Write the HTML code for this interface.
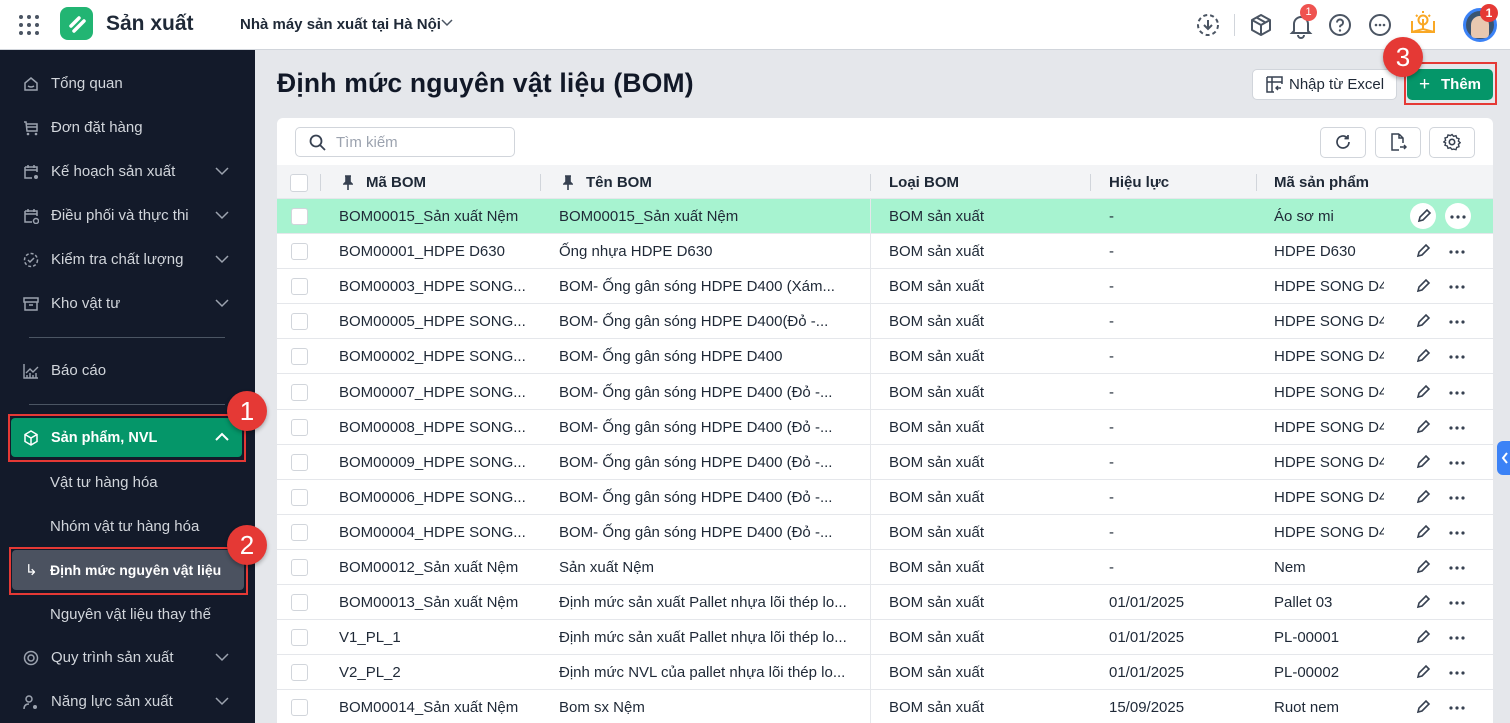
<!DOCTYPE html>
<html style="width:1510px;height:723px;overflow:hidden"><head><meta charset="utf-8">
<style>
*{box-sizing:border-box;margin:0;padding:0}
body{width:1510px;height:723px;overflow:hidden;font-family:"Liberation Sans","Noto Sans CJK SC",sans-serif;background:#e5e7eb;position:relative;color:#1f2937}
.abs{position:absolute}
.top{left:0;top:0;width:1510px;height:50px;background:#fff;border-bottom:1px solid #d1d5db}
.side{left:0;top:50px;width:255px;height:673px;background:#131a2a}
.si{position:absolute;left:0;width:255px;height:30px;color:#d1d5db;font-size:15px;line-height:30px}
.si .ic{position:absolute;left:23px;top:7px;width:16px;height:16px}
.si .t{position:absolute;left:51px}
.si .chev{position:absolute;left:215px;top:9px}
.sub{position:absolute;left:50px;color:#d1d5db;font-size:15px}
.hr{position:absolute;left:29px;width:196px;height:1px;background:#4b5563}
.card{left:277px;top:118px;width:1216px;height:605px;background:#fff;border-radius:6px 6px 0 0}
.row{position:absolute;left:277px;width:1216px;height:35px;border-bottom:1px solid #e5e7eb;font-size:15px;color:#1f2937;background:#fff;overflow:hidden}
.row span{position:absolute;top:9px;white-space:nowrap}
.row span.sp{width:110px;overflow:hidden}
.cb{position:absolute;left:14px;top:9px;width:17px;height:17px;border:1px solid #d1d5db;border-radius:3px;background:#fff}
.pen{position:absolute;left:1138px;top:9px}
.dots{position:absolute;left:1172px;top:16px;width:16px;height:4px}
.btn{position:absolute;border:1px solid #d1d5db;border-radius:5px;background:#fff}
.badge{position:absolute;width:40px;height:40px;border-radius:50%;background:#e53935;color:#fff;font-size:26px;text-align:center;line-height:40px;box-shadow:0 2px 4px rgba(0,0,0,.3)}
.rbox{position:absolute;border:2px solid #e53935}
</style></head><body>
<div class="abs top"></div>
<svg class="abs" style="left:18px;top:14px" width="22" height="22"><g fill="#4b5563"><circle cx="3" cy="3" r="2"/><circle cx="11" cy="3" r="2"/><circle cx="19" cy="3" r="2"/><circle cx="3" cy="11" r="2"/><circle cx="11" cy="11" r="2"/><circle cx="19" cy="11" r="2"/><circle cx="3" cy="19" r="2"/><circle cx="11" cy="19" r="2"/><circle cx="19" cy="19" r="2"/></g></svg>
<div class="abs" style="left:60px;top:7px;width:33px;height:33px;border-radius:8px;background:#22b573"></div>
<svg class="abs" style="left:60px;top:7px" width="33" height="33"><path d="M11 19 L19 11 M14 24 L24 14" stroke="#fff" stroke-width="3.5" stroke-linecap="round" fill="none"/></svg>
<div class="abs" style="left:106px;top:12px;font-size:21px;font-weight:bold;color:#1f2937">Sản xuất</div>
<div class="abs" style="left:240px;top:16px;font-size:15px;font-weight:bold;color:#1f2937">Nhà máy sản xuất tại Hà Nội</div>
<svg class="abs" style="left:441px;top:19px" width="12" height="8"><path d="M1 1l5 5 5-5" stroke="#4b5563" stroke-width="1.5" fill="none"/></svg>
<svg class="abs" style="left:1196px;top:13px" width="24" height="24"><circle cx="12" cy="12" r="10" stroke="#4b5563" stroke-width="2" fill="none" stroke-dasharray="4 3"/><path d="M12 7v9M8 12l4 4 4-4" stroke="#4b5563" stroke-width="2" fill="none"/></svg>
<div class="abs" style="left:1234px;top:14px;width:1px;height:22px;background:#d1d5db"></div>
<svg class="abs" style="left:1250px;top:13px" width="22" height="24"><path d="M11 2l9 5v10l-9 5-9-5V7z M2 7l9 5 9-5 M11 12v10 M6.5 4.5l9 5" stroke="#4b5563" stroke-width="2" fill="none" stroke-linejoin="round"/></svg>
<svg class="abs" style="left:1289px;top:13px" width="24" height="26"><path d="M5 18V11a7 7 0 0 1 14 0v7l2 2H3z M9 22a3 3 0 0 0 6 0" stroke="#4b5563" stroke-width="2" fill="none"/></svg>
<div class="abs" style="left:1300px;top:4px;width:17px;height:17px;border-radius:50%;background:#ef5350;color:#fff;font-size:11px;text-align:center;line-height:17px">1</div>
<svg class="abs" style="left:1328px;top:13px" width="24" height="24"><circle cx="12" cy="12" r="10" stroke="#4b5563" stroke-width="2" fill="none"/><path d="M9 9.5a3 3 0 1 1 4 2.8c-1 .4-1 1-1 2" stroke="#4b5563" stroke-width="2" fill="none"/><circle cx="12" cy="17.5" r="1.2" fill="#4b5563"/></svg>
<svg class="abs" style="left:1368px;top:13px" width="24" height="24"><circle cx="12" cy="12" r="10" stroke="#4b5563" stroke-width="2" fill="none"/><circle cx="8" cy="12" r="1.3" fill="#4b5563"/><circle cx="12" cy="12" r="1.3" fill="#4b5563"/><circle cx="16" cy="12" r="1.3" fill="#4b5563"/></svg>
<svg class="abs" style="left:1410px;top:9px" width="26" height="26"><path d="M2 12v11h22V12 M2 23l11-3 11 3 M13 20V10" stroke="#f9a825" stroke-width="2" fill="none"/><circle cx="13" cy="11" r="4.5" stroke="#f9a825" stroke-width="2" fill="none"/><path d="M13 2v2M6 6l1.5 1.5M20 6l-1.5 1.5" stroke="#f9a825" stroke-width="2"/></svg>
<div class="abs" style="left:1463px;top:8px;width:34px;height:34px;border-radius:50%;border:3px solid #3b82f6;background:#3a5470"></div>
<div class="abs" style="left:1471px;top:16px;width:18px;height:22px;border-radius:9px 9px 4px 4px;background:#e8c8b0"></div>
<div class="abs" style="left:1480px;top:4px;width:18px;height:18px;border-radius:50%;background:#e53935;color:#fff;font-size:12px;font-weight:bold;text-align:center;line-height:18px">1</div>

<div class="abs side"></div>
<div class="si" style="top:69px"><svg class="ic" viewBox="0 0 16 16"><path d="M2 7l6-5 6 5v7H2z M5 10q3 2 6 0" stroke="#9ca3af" stroke-width="1.5" fill="none"/></svg><span class="t">Tổng quan</span></div>
<div class="si" style="top:113px"><svg class="ic" viewBox="0 0 16 16"><path d="M1 2h2l1 9h10V4H3 M4 7h10" stroke="#9ca3af" stroke-width="1.5" fill="none"/><circle cx="5" cy="14" r="1.3" fill="#9ca3af"/><circle cx="13" cy="14" r="1.3" fill="#9ca3af"/></svg><span class="t">Đơn đặt hàng</span></div>
<div class="si" style="top:157px"><svg class="ic" viewBox="0 0 16 16"><path d="M2 3h12v5 M2 3v11h7 M2 6h12 M5 1v3M11 1v3" stroke="#9ca3af" stroke-width="1.5" fill="none"/><circle cx="13" cy="13" r="2" fill="#9ca3af"/></svg><span class="t">Kế hoạch sản xuất</span><svg class="chev" width="14" height="10"><path d="M1 2l6 6 6-6" stroke="#9ca3af" stroke-width="1.5" fill="none"/></svg></div>
<div class="si" style="top:201px"><svg class="ic" viewBox="0 0 16 16"><path d="M2 3h12v5 M2 3v11h7 M2 6h12 M5 1v3M11 1v3" stroke="#9ca3af" stroke-width="1.5" fill="none"/><circle cx="13" cy="13" r="2.5" stroke="#9ca3af" stroke-width="1.5" fill="none"/></svg><span class="t">Điều phối và thực thi</span><svg class="chev" width="14" height="10"><path d="M1 2l6 6 6-6" stroke="#9ca3af" stroke-width="1.5" fill="none"/></svg></div>
<div class="si" style="top:245px"><svg class="ic" viewBox="0 0 16 16"><circle cx="8" cy="8" r="6.5" stroke="#9ca3af" stroke-width="1.5" fill="none" stroke-dasharray="3 2"/><path d="M5 8l2 2 4-4" stroke="#9ca3af" stroke-width="1.5" fill="none"/></svg><span class="t">Kiểm tra chất lượng</span><svg class="chev" width="14" height="10"><path d="M1 2l6 6 6-6" stroke="#9ca3af" stroke-width="1.5" fill="none"/></svg></div>
<div class="si" style="top:289px"><svg class="ic" viewBox="0 0 16 16"><path d="M1 2h14v4H1z M2 6v8h12V6 M6 9h4" stroke="#9ca3af" stroke-width="1.5" fill="none"/></svg><span class="t">Kho vật tư</span><svg class="chev" width="14" height="10"><path d="M1 2l6 6 6-6" stroke="#9ca3af" stroke-width="1.5" fill="none"/></svg></div>
<div class="hr" style="top:337px"></div>
<div class="si" style="top:356px"><svg class="ic" viewBox="0 0 16 16"><path d="M1 1v14h14 M3 10l4-4 3 3 5-5 M4 15v-3M7 15v-5M10 15v-3M13 15v-5" stroke="#9ca3af" stroke-width="1.4" fill="none"/></svg><span class="t">Báo cáo</span></div>
<div class="hr" style="top:404px"></div>
<div class="abs" style="left:11px;top:418px;width:231px;height:39px;border-radius:4px;background:#059669"></div>
<div class="si" style="top:423px;color:#fff;font-weight:bold;font-size:14.5px"><svg class="ic" viewBox="0 0 16 16"><path d="M8 1l6 3.5v7L8 15l-6-3.5v-7z M2 4.5L8 8l6-3.5 M8 8v7" stroke="#fff" stroke-width="1.5" fill="none"/></svg><span class="t">Sản phẩm, NVL</span><svg class="chev" width="14" height="10"><path d="M1 8l6-6 6 6" stroke="#fff" stroke-width="2" fill="none"/></svg></div>
<div class="rbox" style="left:8px;top:414px;width:238px;height:48px"></div>
<div class="sub" style="top:474px">Vật tư hàng hóa</div>
<div class="sub" style="top:518px">Nhóm vật tư hàng hóa</div>
<div class="abs" style="left:12px;top:550px;width:232px;height:40px;border-radius:4px;background:#4b5260"></div>
<div class="abs" style="left:25px;top:561px;color:#fff;font-size:15px">↳</div>
<div class="sub" style="top:562px;color:#fff;font-weight:bold;font-size:14px">Định mức nguyên vật liệu</div>
<div class="rbox" style="left:9px;top:547px;width:239px;height:48px"></div>
<div class="sub" style="top:606px">Nguyên vật liệu thay thế</div>
<div class="si" style="top:643px"><svg class="ic" viewBox="0 0 16 16"><circle cx="8" cy="8" r="6.5" stroke="#9ca3af" stroke-width="1.5" fill="none"/><circle cx="8" cy="8" r="3" stroke="#9ca3af" stroke-width="1.5" fill="none"/></svg><span class="t">Quy trình sản xuất</span><svg class="chev" width="14" height="10"><path d="M1 2l6 6 6-6" stroke="#9ca3af" stroke-width="1.5" fill="none"/></svg></div>
<div class="si" style="top:687px"><svg class="ic" viewBox="0 0 16 16"><circle cx="6" cy="5" r="3" stroke="#9ca3af" stroke-width="1.5" fill="none"/><path d="M1 15q0-5 5-5" stroke="#9ca3af" stroke-width="1.5" fill="none"/><circle cx="12" cy="13" r="2" fill="#9ca3af"/></svg><span class="t">Năng lực sản xuất</span><svg class="chev" width="14" height="10"><path d="M1 2l6 6 6-6" stroke="#9ca3af" stroke-width="1.5" fill="none"/></svg></div>
<div class="badge" style="left:227px;top:391px">1</div>
<div class="badge" style="left:227px;top:525px">2</div>

<div class="abs" style="left:277px;top:68px;font-size:26.5px;font-weight:bold;color:#111827;letter-spacing:0.2px">Định mức nguyên vật liệu (BOM)</div>
<div class="btn" style="left:1252px;top:69px;width:145px;height:31px"></div>
<svg class="abs" style="left:1266px;top:76px" width="17" height="17"><path d="M1 1h15v7 M1 1v15h7 M1 6h15 M6 1v15" stroke="#374151" stroke-width="1.5" fill="none"/><path d="M15 12h-5M12 10l-2 2 2 2" stroke="#374151" stroke-width="1.4" fill="none"/></svg>
<div class="abs" style="left:1289px;top:76px;font-size:15px;color:#1f2937">Nhập từ Excel</div>
<div class="abs" style="left:1407px;top:69px;width:86px;height:31px;border-radius:5px;background:#059669"></div>
<div class="abs" style="left:1419px;top:74px;font-size:19px;color:#fff">+</div>
<div class="abs" style="left:1441px;top:76px;font-size:15px;color:#fff;font-weight:bold">Thêm</div>
<div class="rbox" style="left:1404px;top:62px;width:93px;height:43px"></div>
<div class="badge" style="left:1383px;top:37px">3</div>

<div class="abs card"></div>
<div class="abs" style="left:295px;top:127px;width:220px;height:30px;border:1px solid #d1d5db;border-radius:5px;background:#fff"></div>
<svg class="abs" style="left:309px;top:134px" width="17" height="17"><circle cx="7" cy="7" r="5.5" stroke="#374151" stroke-width="1.8" fill="none"/><path d="M11 11l5 5" stroke="#374151" stroke-width="1.8"/></svg>
<div class="abs" style="left:336px;top:134px;font-size:15px;color:#9ca3af">Tìm kiếm</div>
<div class="btn" style="left:1320px;top:127px;width:46px;height:31px"></div>
<svg class="abs" style="left:1335px;top:134px" width="16" height="16"><path d="M14 8a6 6 0 1 1-2-4.5 M13 1v3.5H9.5" stroke="#374151" stroke-width="1.7" fill="none"/></svg>
<div class="btn" style="left:1375px;top:127px;width:46px;height:31px"></div>
<svg class="abs" style="left:1390px;top:133px" width="17" height="18"><path d="M9 1H2v16h7 M9 1l4 4v5 M9 1v4h4 M10 14h6M14 12l2 2-2 2" stroke="#374151" stroke-width="1.5" fill="none"/></svg>
<div class="btn" style="left:1429px;top:127px;width:46px;height:31px"></div>
<svg class="abs" style="left:1443px;top:133px" width="18" height="18"><circle cx="9" cy="9" r="2.7" stroke="#374151" stroke-width="1.6" fill="none"/><path d="M9 1.5l1.6 1.8 2.4-.6.7 2.3 2.3.7-.6 2.4 1.8 1.6-1.8 1.6.6 2.4-2.3.7-.7 2.3-2.4-.6L9 16.5l-1.6-1.8-2.4.6-.7-2.3-2.3-.7.6-2.4L.8 9l1.8-1.6L2 5l2.3-.7L5 2l2.4.6z" stroke="#374151" stroke-width="1.4" fill="none"/></svg>

<div class="abs" style="left:277px;top:165px;width:1216px;height:34px;background:#f3f4f6;border-bottom:1px solid #e5e7eb"></div>
<div class="abs" style="left:290px;top:174px;width:18px;height:18px;border:1px solid #d1d5db;border-radius:3px;background:#fff"></div>
<div class="abs" style="left:320px;top:174px;width:1px;height:17px;background:#d1d5db"></div>
<div class="abs" style="left:540px;top:174px;width:1px;height:17px;background:#d1d5db"></div>
<div class="abs" style="left:870px;top:174px;width:1px;height:17px;background:#d1d5db"></div>
<div class="abs" style="left:1090px;top:174px;width:1px;height:17px;background:#d1d5db"></div>
<div class="abs" style="left:1256px;top:174px;width:1px;height:17px;background:#d1d5db"></div>
<svg class="abs" style="left:343px;top:175px" width="10" height="15"><path d="M2 1h6M3 1v6L1 9h8L7 7V1M5 9v6" stroke="#374151" stroke-width="1.6" fill="#374151"/></svg>
<svg class="abs" style="left:563px;top:175px" width="10" height="15"><path d="M2 1h6M3 1v6L1 9h8L7 7V1M5 9v6" stroke="#374151" stroke-width="1.6" fill="#374151"/></svg>
<div class="abs" style="left:366px;top:174px;font-size:15px;font-weight:bold;color:#1f2937">Mã BOM</div>
<div class="abs" style="left:586px;top:174px;font-size:15px;font-weight:bold;color:#1f2937">Tên BOM</div>
<div class="abs" style="left:889px;top:174px;font-size:15px;font-weight:bold;color:#1f2937">Loại BOM</div>
<div class="abs" style="left:1109px;top:174px;font-size:15px;font-weight:bold;color:#1f2937">Hiệu lực</div>
<div class="abs" style="left:1274px;top:174px;font-size:15px;font-weight:bold;color:#1f2937">Mã sản phẩm</div>

<div class="row" style="top:199px;background:#a7f3d0"><div class="cb"></div><span style="left:62px">BOM00015_Sản xuất Nệm</span><span style="left:282px">BOM00015_Sản xuất Nệm</span><span style="left:612px">BOM sản xuất</span><span style="left:832px">-</span><span class="sp" style="left:997px">Áo sơ mi</span>
<div class="abs" style="left:1133px;top:4px;width:26px;height:26px;border-radius:50%;background:#fff"></div><div class="abs" style="left:1168px;top:4px;width:26px;height:26px;border-radius:50%;background:#fff"></div>
<svg class="pen" style="left:1139px" width="16" height="16"><path d="M3 13l1-4 7-7 3 3-7 7z" stroke="#374151" stroke-width="1.6" fill="none"/></svg><svg class="dots" style="left:1173px" viewBox="0 0 16 4"><circle cx="2" cy="2" r="1.6" fill="#374151"/><circle cx="8" cy="2" r="1.6" fill="#374151"/><circle cx="14" cy="2" r="1.6" fill="#374151"/></svg></div>

<div class="row" style="top:234px"><div class="cb"></div><span style="left:62px">BOM00001_HDPE D630</span><span style="left:282px">Ống nhựa HDPE D630</span><span style="left:612px">BOM sản xuất</span><span style="left:832px">-</span><span class="sp" style="left:997px">HDPE D630</span><svg class="pen" width="16" height="16"><path d="M3 13l1-4 7-7 3 3-7 7z" stroke="#374151" stroke-width="1.6" fill="none"/></svg><svg class="dots" viewBox="0 0 16 4"><circle cx="2" cy="2" r="1.6" fill="#374151"/><circle cx="8" cy="2" r="1.6" fill="#374151"/><circle cx="14" cy="2" r="1.6" fill="#374151"/></svg></div>
<div class="row" style="top:269px"><div class="cb"></div><span style="left:62px">BOM00003_HDPE SONG...</span><span style="left:282px">BOM- Ống gân sóng HDPE D400 (Xám...</span><span style="left:612px">BOM sản xuất</span><span style="left:832px">-</span><span class="sp" style="left:997px">HDPE SONG D400</span><svg class="pen" width="16" height="16"><path d="M3 13l1-4 7-7 3 3-7 7z" stroke="#374151" stroke-width="1.6" fill="none"/></svg><svg class="dots" viewBox="0 0 16 4"><circle cx="2" cy="2" r="1.6" fill="#374151"/><circle cx="8" cy="2" r="1.6" fill="#374151"/><circle cx="14" cy="2" r="1.6" fill="#374151"/></svg></div>
<div class="row" style="top:304px"><div class="cb"></div><span style="left:62px">BOM00005_HDPE SONG...</span><span style="left:282px">BOM- Ống gân sóng HDPE D400(Đỏ -...</span><span style="left:612px">BOM sản xuất</span><span style="left:832px">-</span><span class="sp" style="left:997px">HDPE SONG D400</span><svg class="pen" width="16" height="16"><path d="M3 13l1-4 7-7 3 3-7 7z" stroke="#374151" stroke-width="1.6" fill="none"/></svg><svg class="dots" viewBox="0 0 16 4"><circle cx="2" cy="2" r="1.6" fill="#374151"/><circle cx="8" cy="2" r="1.6" fill="#374151"/><circle cx="14" cy="2" r="1.6" fill="#374151"/></svg></div>
<div class="row" style="top:339px"><div class="cb"></div><span style="left:62px">BOM00002_HDPE SONG...</span><span style="left:282px">BOM- Ống gân sóng HDPE D400</span><span style="left:612px">BOM sản xuất</span><span style="left:832px">-</span><span class="sp" style="left:997px">HDPE SONG D400</span><svg class="pen" width="16" height="16"><path d="M3 13l1-4 7-7 3 3-7 7z" stroke="#374151" stroke-width="1.6" fill="none"/></svg><svg class="dots" viewBox="0 0 16 4"><circle cx="2" cy="2" r="1.6" fill="#374151"/><circle cx="8" cy="2" r="1.6" fill="#374151"/><circle cx="14" cy="2" r="1.6" fill="#374151"/></svg></div>
<div class="row" style="top:375px"><div class="cb"></div><span style="left:62px">BOM00007_HDPE SONG...</span><span style="left:282px">BOM- Ống gân sóng HDPE D400 (Đỏ -...</span><span style="left:612px">BOM sản xuất</span><span style="left:832px">-</span><span class="sp" style="left:997px">HDPE SONG D400</span><svg class="pen" width="16" height="16"><path d="M3 13l1-4 7-7 3 3-7 7z" stroke="#374151" stroke-width="1.6" fill="none"/></svg><svg class="dots" viewBox="0 0 16 4"><circle cx="2" cy="2" r="1.6" fill="#374151"/><circle cx="8" cy="2" r="1.6" fill="#374151"/><circle cx="14" cy="2" r="1.6" fill="#374151"/></svg></div>
<div class="row" style="top:410px"><div class="cb"></div><span style="left:62px">BOM00008_HDPE SONG...</span><span style="left:282px">BOM- Ống gân sóng HDPE D400 (Đỏ -...</span><span style="left:612px">BOM sản xuất</span><span style="left:832px">-</span><span class="sp" style="left:997px">HDPE SONG D400</span><svg class="pen" width="16" height="16"><path d="M3 13l1-4 7-7 3 3-7 7z" stroke="#374151" stroke-width="1.6" fill="none"/></svg><svg class="dots" viewBox="0 0 16 4"><circle cx="2" cy="2" r="1.6" fill="#374151"/><circle cx="8" cy="2" r="1.6" fill="#374151"/><circle cx="14" cy="2" r="1.6" fill="#374151"/></svg></div>
<div class="row" style="top:445px"><div class="cb"></div><span style="left:62px">BOM00009_HDPE SONG...</span><span style="left:282px">BOM- Ống gân sóng HDPE D400 (Đỏ -...</span><span style="left:612px">BOM sản xuất</span><span style="left:832px">-</span><span class="sp" style="left:997px">HDPE SONG D400</span><svg class="pen" width="16" height="16"><path d="M3 13l1-4 7-7 3 3-7 7z" stroke="#374151" stroke-width="1.6" fill="none"/></svg><svg class="dots" viewBox="0 0 16 4"><circle cx="2" cy="2" r="1.6" fill="#374151"/><circle cx="8" cy="2" r="1.6" fill="#374151"/><circle cx="14" cy="2" r="1.6" fill="#374151"/></svg></div>
<div class="row" style="top:480px"><div class="cb"></div><span style="left:62px">BOM00006_HDPE SONG...</span><span style="left:282px">BOM- Ống gân sóng HDPE D400 (Đỏ -...</span><span style="left:612px">BOM sản xuất</span><span style="left:832px">-</span><span class="sp" style="left:997px">HDPE SONG D400</span><svg class="pen" width="16" height="16"><path d="M3 13l1-4 7-7 3 3-7 7z" stroke="#374151" stroke-width="1.6" fill="none"/></svg><svg class="dots" viewBox="0 0 16 4"><circle cx="2" cy="2" r="1.6" fill="#374151"/><circle cx="8" cy="2" r="1.6" fill="#374151"/><circle cx="14" cy="2" r="1.6" fill="#374151"/></svg></div>
<div class="row" style="top:515px"><div class="cb"></div><span style="left:62px">BOM00004_HDPE SONG...</span><span style="left:282px">BOM- Ống gân sóng HDPE D400 (Đỏ -...</span><span style="left:612px">BOM sản xuất</span><span style="left:832px">-</span><span class="sp" style="left:997px">HDPE SONG D400</span><svg class="pen" width="16" height="16"><path d="M3 13l1-4 7-7 3 3-7 7z" stroke="#374151" stroke-width="1.6" fill="none"/></svg><svg class="dots" viewBox="0 0 16 4"><circle cx="2" cy="2" r="1.6" fill="#374151"/><circle cx="8" cy="2" r="1.6" fill="#374151"/><circle cx="14" cy="2" r="1.6" fill="#374151"/></svg></div>
<div class="row" style="top:550px"><div class="cb"></div><span style="left:62px">BOM00012_Sản xuất Nệm</span><span style="left:282px">Sản xuất Nệm</span><span style="left:612px">BOM sản xuất</span><span style="left:832px">-</span><span class="sp" style="left:997px">Nem</span><svg class="pen" width="16" height="16"><path d="M3 13l1-4 7-7 3 3-7 7z" stroke="#374151" stroke-width="1.6" fill="none"/></svg><svg class="dots" viewBox="0 0 16 4"><circle cx="2" cy="2" r="1.6" fill="#374151"/><circle cx="8" cy="2" r="1.6" fill="#374151"/><circle cx="14" cy="2" r="1.6" fill="#374151"/></svg></div>
<div class="row" style="top:585px"><div class="cb"></div><span style="left:62px">BOM00013_Sản xuất Nệm</span><span style="left:282px">Định mức sản xuất Pallet nhựa lõi thép lo...</span><span style="left:612px">BOM sản xuất</span><span style="left:832px">01/01/2025</span><span class="sp" style="left:997px">Pallet 03</span><svg class="pen" width="16" height="16"><path d="M3 13l1-4 7-7 3 3-7 7z" stroke="#374151" stroke-width="1.6" fill="none"/></svg><svg class="dots" viewBox="0 0 16 4"><circle cx="2" cy="2" r="1.6" fill="#374151"/><circle cx="8" cy="2" r="1.6" fill="#374151"/><circle cx="14" cy="2" r="1.6" fill="#374151"/></svg></div>
<div class="row" style="top:620px"><div class="cb"></div><span style="left:62px">V1_PL_1</span><span style="left:282px">Định mức sản xuất Pallet nhựa lõi thép lo...</span><span style="left:612px">BOM sản xuất</span><span style="left:832px">01/01/2025</span><span class="sp" style="left:997px">PL-00001</span><svg class="pen" width="16" height="16"><path d="M3 13l1-4 7-7 3 3-7 7z" stroke="#374151" stroke-width="1.6" fill="none"/></svg><svg class="dots" viewBox="0 0 16 4"><circle cx="2" cy="2" r="1.6" fill="#374151"/><circle cx="8" cy="2" r="1.6" fill="#374151"/><circle cx="14" cy="2" r="1.6" fill="#374151"/></svg></div>
<div class="row" style="top:655px"><div class="cb"></div><span style="left:62px">V2_PL_2</span><span style="left:282px">Định mức NVL của pallet nhựa lõi thép lo...</span><span style="left:612px">BOM sản xuất</span><span style="left:832px">01/01/2025</span><span class="sp" style="left:997px">PL-00002</span><svg class="pen" width="16" height="16"><path d="M3 13l1-4 7-7 3 3-7 7z" stroke="#374151" stroke-width="1.6" fill="none"/></svg><svg class="dots" viewBox="0 0 16 4"><circle cx="2" cy="2" r="1.6" fill="#374151"/><circle cx="8" cy="2" r="1.6" fill="#374151"/><circle cx="14" cy="2" r="1.6" fill="#374151"/></svg></div>
<div class="row" style="top:690px;height:33px;border-bottom:none"><div class="cb"></div><span style="left:62px">BOM00014_Sản xuất Nệm</span><span style="left:282px">Bom sx Nệm</span><span style="left:612px">BOM sản xuất</span><span style="left:832px">15/09/2025</span><span class="sp" style="left:997px">Ruot nem</span><svg class="pen" width="16" height="16"><path d="M3 13l1-4 7-7 3 3-7 7z" stroke="#374151" stroke-width="1.6" fill="none"/></svg><svg class="dots" viewBox="0 0 16 4"><circle cx="2" cy="2" r="1.6" fill="#374151"/><circle cx="8" cy="2" r="1.6" fill="#374151"/><circle cx="14" cy="2" r="1.6" fill="#374151"/></svg></div>
<div class="abs" style="left:870px;top:199px;width:1px;height:524px;background:#e5e7eb"></div>
<div class="abs" style="left:1497px;top:441px;width:13px;height:34px;border-radius:6px 0 0 6px;background:#3b82f6"></div>
<svg class="abs" style="left:1501px;top:451px" width="8" height="14"><path d="M6 2L2 7l4 5" stroke="#fff" stroke-width="2" fill="none"/></svg>
</body></html>
